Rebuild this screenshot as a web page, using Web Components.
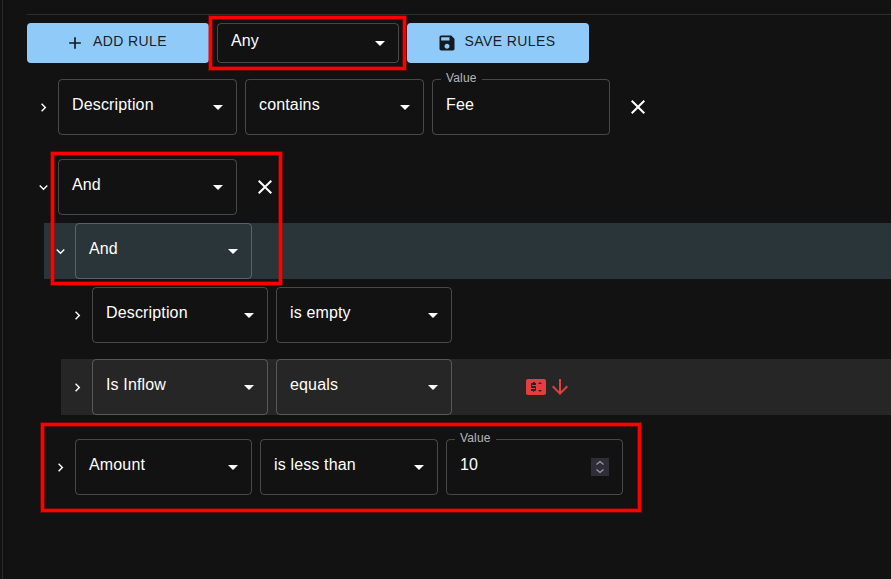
<!DOCTYPE html>
<html lang="en">
<head>
<meta charset="utf-8">
<title>Rules</title>
<style>
  html, body { margin: 0; height: 100%; background: #121212; overflow: hidden; }
  body { font-family: "Liberation Sans", Arial, sans-serif; letter-spacing: .15px; color: #fff; }
</style>
</head>
<body>
<rule-page>
  <rule-toolbar slot="toolbar">
    <rule-button icon="add" style="width:182px">Add Rule</rule-button>
    <rule-select compact value="Any" style="width:182px"></rule-select>
    <rule-button icon="save" style="width:182px">Save Rules</rule-button>
  </rule-toolbar>

  <rule-group gap="24">
    <rule-row>
      <rule-select value="Description" style="width:179px"></rule-select>
      <rule-select value="contains" style="width:179px"></rule-select>
      <rule-value value="Fee" style="width:178px"></rule-value>
      <rule-remove></rule-remove>
    </rule-row>

    <rule-group gap="8">
      <rule-row open>
        <rule-select value="And" style="width:179px"></rule-select>
        <rule-remove></rule-remove>
      </rule-row>
      <rule-group gap="24" indent>
        <rule-group gap="8">
          <rule-row open tone="blue">
            <rule-select value="And" style="width:177px"></rule-select>
          </rule-row>
          <rule-group gap="16" indent>
            <rule-row>
              <rule-select value="Description" style="width:176px"></rule-select>
              <rule-select value="is empty" style="width:176px"></rule-select>
            </rule-row>
            <rule-row tone="grey">
              <rule-select value="Is Inflow" style="width:176px"></rule-select>
              <rule-select value="equals" style="width:176px"></rule-select>
              <rule-indicator></rule-indicator>
            </rule-row>
          </rule-group>
        </rule-group>
        <rule-row>
          <rule-select value="Amount" style="width:177px"></rule-select>
          <rule-select value="is less than" style="width:178px"></rule-select>
          <rule-value value="10" spinner style="width:177px"></rule-value>
        </rule-row>
      </rule-group>
    </rule-group>
  </rule-group>
</rule-page>

<rule-mark style="left:209px;top:16px;width:197px;height:54px"></rule-mark>
<rule-mark style="left:51px;top:152px;width:231px;height:133px"></rule-mark>
<rule-mark style="left:41px;top:423px;width:600px;height:89px"></rule-mark>

<script>
const ICONS = {
  add: 'M19 13h-6v6h-2v-6H5v-2h6V5h2v6h6v2z',
  save: 'M17 3H5c-1.11 0-2 .9-2 2v14c0 1.1.89 2 2 2h14c1.1 0 2-.9 2-2V7l-4-4zm-5 16c-1.66 0-3-1.34-3-3s1.34-3 3-3 3 1.34 3 3-1.34 3-3 3zm3-10H5V5h10v4z',
  drop: 'M7 10l5 5 5-5z',
  close: 'M19 6.41 17.59 5 12 10.59 6.41 5 5 6.41 10.59 12 5 17.59 6.41 19 12 13.41 17.59 19 19 17.59 13.41 12z',
  right: 'M10 6 8.59 7.41 13.17 12l-4.58 4.59L10 18l6-6z',
  down: 'M16.59 8.59 12 13.17 7.41 8.59 6 10l6 6 6-6z',
  price: 'M20 4H4c-1.11 0-1.99.89-1.99 2L2 18c0 1.11.89 2 2 2h16c1.11 0 2-.89 2-2V6c0-1.11-.89-2-2-2zM12 10H8v1h3c.55 0 1 .45 1 1v3c0 .55-.45 1-1 1h-1v1H9v-1H7v-2h4v-1H8c-.55 0-1-.45-1-1V9c0-.55.45-1 1-1h1V7h2v1h1v2zm4 7-2-2h4l-2 2zm2-8h-4l2-2 2 2z',
  arrow: 'M20 12l-1.41-1.41L13 16.17V4h-2v12.17l-5.58-5.59L4 12l8 8 8-8z'
};

const icon = (name, size) =>
  `<svg width="${size}" height="${size}" viewBox="0 0 24 24" fill="currentColor" aria-hidden="true"><path d="${ICONS[name]}"/></svg>`;

// small helper, every element below is just a shadow root with its own <style>
class RuleElement extends HTMLElement {
  connectedCallback() {
    if (this.shadowRoot) return;
    this.attachShadow({ mode: 'open' });
    this.shadowRoot.innerHTML = this.render();
  }
}

class RulePage extends RuleElement {
  render() {
    return `
      <style>
        :host { display: block; height: 100vh; box-sizing: border-box; margin-left: 2px; border-left: 1px solid #2b2b2b; padding-top: 14px; }
        .line { height: 1px; margin: 0 0 8px 24px; background: #2e2e2e; }
        .body { padding-left: 24px; }
        .tree { margin-top: 16px; }
      </style>
      <div class="line"></div>
      <div class="body">
        <slot name="toolbar"></slot>
        <div class="tree"><slot></slot></div>
      </div>`;
  }
}

class RuleToolbar extends RuleElement {
  render() {
    return `
      <style>:host { display: flex; gap: 8px; }</style>
      <slot></slot>`;
  }
}

class RuleButton extends RuleElement {
  render() {
    return `
      <style>
        :host { display: flex; align-items: center; justify-content: center; height: 40px; box-sizing: border-box; border-radius: 4px; background: #90caf9; color: rgba(0,0,0,.87); font-size: 14px; letter-spacing: .4px; text-transform: uppercase; }
        svg { display: block; margin: 0 8px 0 -4px; }
        span { margin-bottom: 4px; }
      </style>
      ${icon(this.getAttribute('icon'), 20)}<span><slot></slot></span>`;
  }
}

class RuleSelect extends RuleElement {
  render() {
    return `
      <style>
        :host { display: flex; align-items: center; justify-content: space-between; flex: none; height: 56px; box-sizing: border-box; padding: 0 6px 0 13px; border: 1px solid rgba(255,255,255,.23); border-radius: 4px; font-size: 16px; }
        :host([compact]) { height: 40px; }
        span { margin-bottom: 5px; white-space: nowrap; }
        svg { display: block; flex: none; }
      </style>
      <span>${this.getAttribute('value')}</span>${icon('drop', 24)}`;
  }
}

class RuleValue extends RuleElement {
  render() {
    const spinner = this.hasAttribute('spinner') ? `
      <svg class="spin" width="18" height="18" viewBox="0 0 18 18" fill="none" stroke="#9a9aa2" stroke-width="1.3" aria-hidden="true">
        <path d="M5.5 6.5 9 3.5l3.5 3M5.5 11.5 9 14.5l3.5-3"/>
      </svg>` : '';
    return `
      <style>
        :host { display: flex; align-items: center; justify-content: space-between; position: relative; flex: none; height: 56px; box-sizing: border-box; padding: 0 13px; border: 1px solid rgba(255,255,255,.23); border-radius: 4px; font-size: 16px; }
        label { position: absolute; left: 8px; top: -10px; padding: 0 5px; background: #121212; color: rgba(255,255,255,.7); font-size: 12px; line-height: 16px; }
        span { margin-bottom: 5px; }
        .spin { display: block; background: #2e2d38; }
      </style>
      <label>Value</label><span>${this.getAttribute('value')}</span>${spinner}`;
  }
}

class RuleRemove extends RuleElement {
  render() {
    return `
      <style>:host { display: flex; align-items: center; justify-content: center; flex: none; width: 40px; height: 56px; }</style>
      ${icon('close', 24)}`;
  }
}

class RuleIndicator extends RuleElement {
  render() {
    return `
      <style>
        :host { display: flex; align-items: center; flex: none; margin-left: 64px; color: #e53e3e; }
        svg { display: block; }
      </style>
      ${icon('price', 24)}${icon('arrow', 24)}`;
  }
}

class RuleRow extends RuleElement {
  render() {
    const bg = { blue: '#2a3539', grey: '#262626' }[this.getAttribute('tone')] || 'transparent';
    return `
      <style>
        :host { display: block; margin-right: -1px; }
        .row { display: flex; align-items: center; gap: 8px; height: 56px; background: ${bg}; }
        .toggle { display: flex; align-items: center; justify-content: center; flex: none; width: 24px; margin: 0 -5px 0 4px; color: #fff; }
        svg { display: block; }
      </style>
      <div class="row">
        <div class="toggle">${icon(this.hasAttribute('open') ? 'down' : 'right', 17)}</div>
        <slot></slot>
      </div>`;
  }
}

class RuleGroup extends RuleElement {
  render() {
    return `
      <style>
        :host { display: flex; flex-direction: column; gap: ${this.getAttribute('gap') || 8}px; }
        :host([indent]) { padding-left: 17px; }
      </style>
      <slot></slot>`;
  }
}

// red annotation frames drawn on top of the screenshot, soft edge like the original markup
class RuleMark extends RuleElement {
  render() {
    return `<style>:host { position: absolute; box-sizing: border-box; border: 3px solid #f00; box-shadow: 0 0 0 1px rgba(210,0,0,.45), inset 0 0 0 1px rgba(210,0,0,.45); pointer-events: none; }</style>`;
  }
}

customElements.define('rule-page', RulePage);
customElements.define('rule-toolbar', RuleToolbar);
customElements.define('rule-button', RuleButton);
customElements.define('rule-select', RuleSelect);
customElements.define('rule-value', RuleValue);
customElements.define('rule-remove', RuleRemove);
customElements.define('rule-indicator', RuleIndicator);
customElements.define('rule-row', RuleRow);
customElements.define('rule-group', RuleGroup);
customElements.define('rule-mark', RuleMark);
</script>
</body>
</html>
